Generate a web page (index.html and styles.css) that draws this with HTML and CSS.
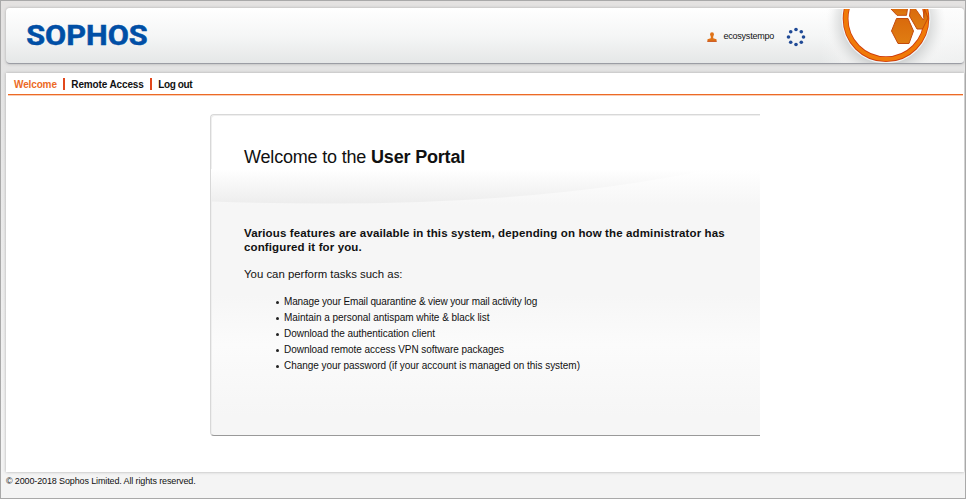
FILE: index.html
```
<!DOCTYPE html>
<html lang="en">
<head>
<meta charset="utf-8">
<title>User Portal</title>
<link rel="stylesheet" href="styles.css">
</head>
<body>
<div class="page">
  <header class="header">
    <svg class="logo" width="126" height="40" viewBox="0 0 126 40"><text x="1.200" y="30" textLength="121.500" lengthAdjust="spacingAndGlyphs">SOPHOS</text></svg>
    <div class="user">
      <svg width="10" height="10" viewBox="0 0 10 10"><path d="M3 2.500Q3 .2 5 .2T7 2.500L6.200 4.800V6.300L9.500 7.300V9.500H.5V7.300L3.800 6.300V4.800Z" fill="#e07318"/><path d="M.3 9.300H9.700" stroke="#c64b12"/></svg>
      <span class="name">ecosystempo</span>
    </div>
    <svg class="spinner" width="20" height="20" viewBox="0 0 20 20" fill="#204a96"><circle cx="10" cy="2.500" r="1.800"/><circle cx="15.300" cy="4.700" r="1.800"/><circle cx="17.500" cy="10" r="1.800"/><circle cx="15.300" cy="15.300" r="1.800"/><circle cx="10" cy="17.500" r="1.800"/><circle cx="4.700" cy="15.300" r="1.800"/><circle cx="2.500" cy="10" r="1.800"/><circle cx="4.700" cy="4.700" r="1.800"/></svg>
    <svg class="emblem" width="144" height="54" viewBox="820 9 144 54">
      <defs>
        <radialGradient id="halo"><stop offset=".68" stop-color="#d2d4d4"/><stop offset=".85" stop-color="#e8e9e9" stop-opacity=".8"/><stop offset="1" stop-color="#f4f4f4" stop-opacity="0"/></radialGradient>
        <linearGradient id="fade"><stop offset="0" stop-color="#fafafa" stop-opacity="0"/><stop offset=".35" stop-color="#fafafa" stop-opacity=".75"/><stop offset="1" stop-color="#fafafa" stop-opacity=".45"/></linearGradient>
        <linearGradient id="orange" x1="0" y1="0" x2="0" y2="1"><stop offset="0" stop-color="#d96a0c"/><stop offset="1" stop-color="#e07d12"/></linearGradient>
      </defs>
      <rect x="820" y="9" width="144" height="54" fill="url(#fade)"/>
      <circle cx="886" cy="24" r="60" fill="url(#halo)"/>
      <circle cx="886" cy="18.800" r="44.500" fill="#eef5f7"/>
      <circle cx="886" cy="18.800" r="40.400" fill="#fff" stroke="#cf3c0c" stroke-width="5.800"/>
      <circle cx="886" cy="18.800" r="40.400" fill="none" stroke="#f07a08" stroke-width="4.200"/>
      <g fill="url(#orange)" stroke="#c34a0d" stroke-width="1">
        <path d="M890.500 8.500L897 15.300H906.500L907.500 8.500Z"/>
        <path d="M896.500 18.500H908L913.500 31L909 43.500H898L891.500 31Z"/>
        <path d="M910.500 8.500L909.500 16L917 29H922.500L928 18L924.500 8.500L923.500 20L915.500 8.500Z"/>
      </g>
      <path d="M915.500 8L923.500 19.500L921.500 8Z" fill="#fff"/>
    </svg>
  </header>
  <main class="main">
    <nav class="nav"><a class="active">Welcome</a><a>Remote Access</a><a>Log out</a></nav>
    <section class="panel">
      <svg class="wave" width="549" height="100" viewBox="0 0 549 100">
        <defs><linearGradient id="shade" gradientUnits="userSpaceOnUse" x1="0" y1="54" x2="0" y2="89"><stop offset="0" stop-color="#fff"/><stop offset="1" stop-color="#ededed"/></linearGradient></defs>
        <path d="M0 54H500Q300 97 0 86.500Z" fill="url(#shade)"/>
      </svg>
      <h1>Welcome to the <b>User Portal</b></h1>
      <p class="lead"><span>Various features are available in this system, depending on how the administrator has</span><br><span>configured it for you.</span></p>
      <p class="intro">You can perform tasks such as:</p>
      <ul>
        <li>Manage your Email quarantine &amp; view your mail activity log</li>
        <li>Maintain a personal antispam white &amp; black list</li>
        <li>Download the authentication client</li>
        <li>Download remote access VPN software packages</li>
        <li>Change your password (if your account is managed on this system)</li>
      </ul>
    </section>
  </main>
  <footer>© 2000-2018 Sophos Limited. All rights reserved.</footer>
</div>
</body>
</html>
```
FILE: styles.css
```
* { box-sizing: border-box; }
body { margin: 0; font-family: "Liberation Sans", Arial, sans-serif; color: #111; }
.page { height: 499px; padding: 7px 1px 0 5px; border: 1px solid #a9a9a9; background: linear-gradient(#e4e2e1, #e4e4e4 75px, #f4f4f4 440px); }
.header { height: 56px; width: 958px; display: flex; border-radius: 4px; background: linear-gradient(#fff, #f5f6f6 50%, #e5e7e7); border-bottom: 1px solid #9b9da4; box-shadow: 0 0 3px #aaa; overflow: hidden; }
.logo { margin: 7px 0 0 19px; flex: none; }
.logo text { font: 700 27px Roboto, sans-serif; fill: #004fa6; stroke: #004fa6; stroke-width: .5px; }
.user { display: flex; align-items: flex-start; gap: 6.500px; margin: 25px 0 0 556px; width: 79px; }
.user svg { margin-top: -1px; }
.name { font-size: 9px; line-height: 10px; margin-top: -2px; letter-spacing: -.23px; }
.spinner { margin-top: 19px; flex: none; }
.emblem { margin-left: auto; flex: none; margin-top: 1px; }
.main { width: 958px; height: 399px; margin-top: 9px; background: #fff; box-shadow: 0 0 3px #aaa; padding: 0 1px 0 2px; }
.nav { display: flex; height: 22px; border-bottom: 1px solid #ec6a25; box-shadow: 0 1px #f9cdb5; padding: 5px 0 0 6px; font-size: 10px; font-weight: 700; line-height: 13px; letter-spacing: -.13px; }
.nav a { height: 12px; padding-right: 6.500px; margin-right: 6px; border-right: 2px solid #e2481c; }
.nav a:last-child { border: 0; letter-spacing: -.4px; }
.nav .active { color: #ec6a25; }
.panel { position: relative; width: 550px; height: 322px; margin: 19px 0 0 202px; padding: 0 0 0 33px; border: 1px solid #d8d8d8; border-right: 0; border-bottom-color: #999; border-radius: 4px 0 0 4px; background: linear-gradient(#fff 54px, #f6f6f6 90px, #f6f6f6 180px, #fbfbfb 230px, #f6f6f6 300px); box-shadow: inset 1px 1px #efefef; }
.wave { position: absolute; left: 0; top: 0; }
h1 { position: relative; font-size: 18px; font-weight: 400; line-height: 20px; margin: 32px 0 0; white-space: nowrap; letter-spacing: -.18px; }
.lead { font-size: 11.500px; font-weight: 700; line-height: 14px; margin: 59px 0 0; white-space: nowrap; letter-spacing: .13px; }
.intro { font-size: 11.400px; line-height: 14px; margin: 13px 0 0; }
ul { list-style: none; margin: 13px 0 0 31px; padding: 0; font-size: 10px; line-height: 16px; letter-spacing: -.04px; }
li { display: flex; align-items: center; gap: 5px; }
li:first-child { letter-spacing: -.14px; }
li::before { content: ""; width: 3px; height: 3px; margin-left: 1px; border-radius: 2px; background: #222; }
footer { font-size: 9px; line-height: 12px; margin-top: 3px; letter-spacing: -.13px; }
```
